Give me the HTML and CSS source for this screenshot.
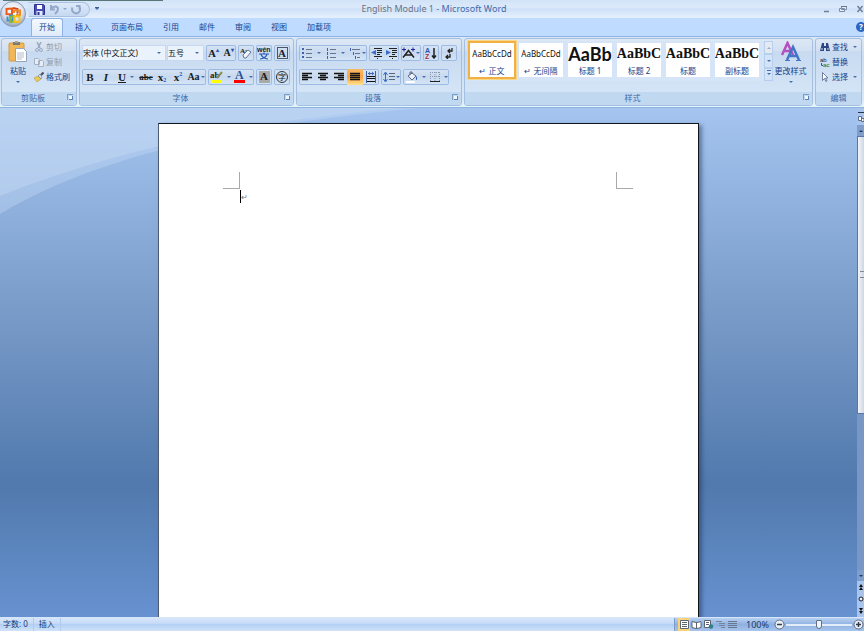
FILE: index.html
```html
<!DOCTYPE html>
<html lang="zh-CN">
<head>
    <meta charset="UTF-8">
    <title>English Module 1 - Microsoft Word</title>
    <link rel="stylesheet" href="styles.css">
</head>
<body>
    <header class="titlebar">
        <button class="office" aria-label="Office">
            <svg width="26" height="28" viewBox="0 0 26 28">
                <defs>
                    <radialGradient id="orb" cx="50%" cy="35%" r="65%">
                        <stop offset="0" stop-color="#ffffff"/>
                        <stop offset=".6" stop-color="#dce3ee"/>
                        <stop offset="1" stop-color="#8d9db8"/>
                    </radialGradient>
                </defs>
                <circle cx="13" cy="14" r="12.5" fill="url(#orb)" stroke="#8b9ab2"/>
                <g fill="none" stroke-width="2">
                    <path d="M12 8.500L6.500 9v5l5.500.500z" stroke="#ea5a1c"/>
                    <path d="M13 8l4.500 1v4.500" stroke="#d8431a"/>
                    <path d="M14 13V10.500h6V15h-4" stroke="#ef8b22"/>
                    <path d="M7.500 16.500v4h5v-5H9" stroke="#3f8fd0"/>
                    <path d="M10 17v5l4-.5V16z" stroke="#86b83a"/>
                    <path d="M14.500 16.500h5v5.500h-5z" stroke="#f3bf1e"/>
                </g>
            </svg>
        </button>
        <div class="quick">
            <button aria-label="保存"><svg width="11" height="11" viewBox="0 0 11 11"><path d="M.5.500h9l1 1v9H.500z" fill="#4a4fb8" stroke="#2c3190"/><path d="M3 1h5v4H3z" fill="#fff"/><path d="M2.500 7h6v4h-6z" fill="#e6eafa"/><path d="M3.500 8h2v3h-2z" fill="#2c3190"/></svg></button>
            <button class="with-caret" aria-label="撤消"><svg width="11" height="11" viewBox="0 0 11 11"><path d="M2 1v4.500h4M2.500 5C4 2 9 1.500 9 5c0 2-1.500 3.500-3 5" fill="none" stroke="#94a9c9" stroke-width="2"/></svg><i class="caret faded"></i></button>
            <button aria-label="重复"><svg width="11" height="11" viewBox="0 0 11 11"><path d="M6 2h3.500v3.500M9 2.500a4 4 0 1 1-6.500 1" fill="none" stroke="#94a9c9" stroke-width="2"/></svg></button>
        </div>
        <button class="customize" aria-label="自定义"><i class="caret"></i></button>
        <h1>English Module 1 <span>- Microsoft Word</span></h1>
        <div class="window-buttons">
            <button aria-label="最小化"><svg width="8" height="8" viewBox="0 0 8 8"><path d="M2 6.500h5" stroke="#6f7f98" stroke-width="1.500"/></svg></button>
            <button aria-label="还原"><svg width="8" height="8" viewBox="0 0 8 8"><path d="M2.500 1.500h5v3h-5zM.500 3.500h5v3h-5z" fill="#e4edf8" stroke="#7c8ca5"/><path d="M2 1.500h6" stroke="#66768f"/></svg></button>
            <button aria-label="关闭"><svg width="8" height="8" viewBox="0 0 8 8"><path d="M1.500 1l5 6M6.500 1l-5 6" stroke="#6f7f98" stroke-width="1.500"/></svg></button>
        </div>
    </header>

    <nav class="tabs">
        <a href="#home" class="active">开始</a>
        <a href="#insert">插入</a>
        <a href="#layout">页面布局</a>
        <a href="#references">引用</a>
        <a href="#mailings">邮件</a>
        <a href="#review">审阅</a>
        <a href="#view">视图</a>
        <a href="#addins">加载项</a>
        <button class="help" aria-label="帮助">?</button>
    </nav>

    <div class="ribbon">
        <section class="group clipboard">
            <div class="group-body">
                <button class="big">
                    <svg width="20" height="22" viewBox="0 0 20 22"><rect x="1" y="2" width="15" height="18" rx="1" fill="#efb758" stroke="#d59a45"/><path d="M5 1h7v3H5z" fill="#7d7a72"/><path d="M7 0h3v2H7z" fill="#a8a395"/><path d="M7.500 7.500h8l3 3v10h-11z" fill="#fff" stroke="#93a3bd"/><path d="M9 12h7M9 14h7M9 16h7M9 18h5" stroke="#b0bccd"/></svg>
                    <span>粘贴</span>
                    <i class="caret"></i>
                </button>
                <div class="stack">
                    <button class="small" disabled><svg width="10" height="10" viewBox="0 0 10 10"><path d="M3 0l3 6M7 0L4 6" stroke="#9aa9bf" stroke-width="1.500"/><circle cx="3" cy="8" r="1.500" fill="none" stroke="#9aa9bf"/><circle cx="7" cy="8" r="1.500" fill="none" stroke="#9aa9bf"/></svg><span>剪切</span></button>
                    <button class="small" disabled><svg width="10" height="10" viewBox="0 0 10 10"><path d="M.500 1.500h4l1 1v5h-5zM4.500 3.500h4l1 1v5h-5z" fill="#e8edf4" stroke="#a5b2c6"/></svg><span>复制</span></button>
                    <button class="small"><svg width="10" height="10" viewBox="0 0 10 10"><path d="M0 6l4-2 3 3-4 3z" fill="#eccb52" stroke="#a68a38" stroke-width=".5"/><path d="M4 4l2-2 2 3-1 2z" fill="#d5dbe8" stroke="#5b6577" stroke-width=".5"/><path d="M7 3l2.500-2.500" stroke="#4a4a58" stroke-width="2"/></svg><span>格式刷</span></button>
                </div>
            </div>
            <h2>剪贴板</h2>
            <button class="launcher" aria-label="剪贴板选项"></button>
        </section>

        <section class="group font">
            <div class="group-body rows">
                <div class="row">
                    <div class="combos">
                        <label class="combo family"><select aria-label="字体"><option>宋体 (中文正文)</option></select><i class="caret"></i></label>
                        <label class="combo size"><select aria-label="字号"><option>五号</option></select><i class="caret"></i></label>
                    </div>
                    <div class="bar">
                        <button class="narrow letter" aria-label="增大字体">A<i class="mark">▴</i></button>
                        <button class="narrow letter minor" aria-label="缩小字体">A<i class="mark">▾</i></button>
                    </div>
                    <div class="bar"><button aria-label="清除格式"><svg width="14" height="14" viewBox="0 0 14 14"><text x="1" y="7" font-size="7" font-weight="bold" font-family="Liberation Serif" fill="#222">Aa</text><path d="M4 9l5-5 3 2-5 6H5z" fill="#f3f5fa" stroke="#66779a"/></svg></button></div>
                    <div class="bar"><button aria-label="拼音指南"><svg width="14" height="14" viewBox="0 0 14 14"><text x="0" y="6" font-size="7" font-weight="bold" font-family="Liberation Sans" fill="#222">wén</text><path d="M2 8h10M7 6.500V8M4 8.500c1 2.500 3 4 7 4.500M10 8.500c-1 2.500-3 4-7 4.500" fill="none" stroke="#2a5bb8" stroke-width="1.200"/></svg></button></div>
                    <div class="bar"><button class="letter" aria-label="字符边框"><span class="boxed">A</span></button></div>
                </div>
                <div class="row">
                    <div class="bar">
                        <button class="letter">B</button>
                        <button class="letter"><em>I</em></button>
                        <button class="letter drop"><u>U</u><i class="caret"></i></button>
                        <button class="letter tiny"><s>abc</s></button>
                        <button class="letter" aria-label="下标">x<i class="mark sub">2</i></button>
                        <button class="letter" aria-label="上标">x<i class="mark">2</i></button>
                        <button class="letter drop tight">Aa<i class="caret"></i></button>
                    </div>
                    <div class="bar">
                        <button class="drop" aria-label="突出显示"><svg width="13" height="14" viewBox="0 0 13 14"><text x="0" y="8" font-size="9" font-weight="bold" font-family="Liberation Serif" fill="#222">ab</text><path d="M7 8l5-6" stroke="#8a8f58" stroke-width="2"/><path d="M1 10h11v3H1z" fill="#ff0"/></svg><i class="caret"></i></button>
                        <button class="drop snug" aria-label="字体颜色"><svg width="13" height="14" viewBox="0 0 13 14"><text x="2" y="9" font-size="12" font-weight="bold" font-family="Liberation Serif" fill="#2e4f96">A</text><path d="M1 10h11v3H1z" fill="#f00"/></svg><i class="caret"></i></button>
                    </div>
                    <div class="bar"><button class="letter"><span class="shaded">A</span></button></div>
                    <div class="bar"><button><span class="circled">字</span></button></div>
                </div>
            </div>
            <h2>字体</h2>
            <button class="launcher" aria-label="字体选项"></button>
        </section>

        <section class="group paragraph">
            <div class="group-body rows">
                <div class="row">
                    <div class="bar">
                        <button class="drop" aria-label="项目符号"><svg width="12" height="12" viewBox="0 0 12 12"><path d="M1 2h2M1 6h2M1 10h2" stroke="#3f62ad" stroke-width="2"/><path d="M5 2.500h6M5 6.500h6M5 10.500h6" stroke="#66758e"/></svg><i class="caret"></i></button>
                        <button class="drop" aria-label="编号"><svg width="12" height="12" viewBox="0 0 12 12"><path d="M2.500 1v3M2.500 5v3M2.500 9v3" stroke="#3f62ad"/><path d="M5 2.500h6M5 6.500h6M5 10.500h6" stroke="#66758e"/></svg><i class="caret"></i></button>
                        <button class="drop tight" aria-label="多级列表"><svg width="12" height="12" viewBox="0 0 12 12"><path d="M1.500 1v3M4.500 5v3M6.500 9v3" stroke="#3f62ad"/><path d="M3 2.500h8M6 6.500h5M8 10.500h3" stroke="#66758e"/></svg><i class="caret"></i></button>
                    </div>
                    <div class="bar">
                        <button class="narrow" aria-label="减少缩进量"><svg width="12" height="12" viewBox="0 0 12 12"><path d="M3 1.500h8M6 3.500h5M6 5.500h5M6 7.500h3M3 9.500h8" stroke="#222"/><path d="M6 11.500h1" stroke="#222"/><path d="M5 3v5L0 5.500z" fill="#3c6cc4"/></svg></button>
                        <button class="narrow" aria-label="增加缩进量"><svg width="12" height="12" viewBox="0 0 12 12"><path d="M3 1.500h8M6 3.500h5M6 5.500h5M6 7.500h3M3 9.500h8" stroke="#222"/><path d="M6 11.500h1" stroke="#222"/><path d="M0 3v5l5-2.500z" fill="#3c6cc4"/></svg></button>
                    </div>
                    <div class="bar"><button class="drop tight" aria-label="中文版式"><svg width="13" height="12" viewBox="0 0 13 12"><path d="M0 2.500h4M2 .500v4M9 2.500h4M11 .500v4" stroke="#23239a"/><path d="M1 10.500l5.500-7L12 10.500M3 8h7" fill="none" stroke="#222" stroke-width="1.500"/></svg><i class="caret"></i></button></div>
                    <div class="bar"><button aria-label="排序"><svg width="12" height="12" viewBox="0 0 12 12"><text x="0" y="6" font-size="7" font-weight="bold" font-family="Liberation Sans" fill="#2b55ad">A</text><text x="0" y="12" font-size="7" font-weight="bold" font-family="Liberation Sans" fill="#a8323c">Z</text><path d="M9 1v10M7 8.500l2 2.500 2-2.500" fill="none" stroke="#222" stroke-width="1.500"/></svg></button></div>
                    <div class="bar"><button aria-label="显示编辑标记"><svg width="12" height="12" viewBox="0 0 12 12"><path d="M9 1v3H5M7 2L5 4l2 2M7 7v3H3M5 8l-2 2 2 2" fill="none" stroke="#222" stroke-width="1.300"/></svg></button></div>
                </div>
                <div class="row">
                    <div class="bar">
                        <button aria-label="左对齐"><svg width="12" height="10" viewBox="0 0 12 10"><path d="M1 1.500h10M1 3.500h6M1 5.500h10M1 7.500h6" stroke="#111" stroke-width="1.300"/></svg></button>
                        <button aria-label="居中"><svg width="12" height="10" viewBox="0 0 12 10"><path d="M1 1.500h10M3 3.500h6M1 5.500h10M3 7.500h6" stroke="#111" stroke-width="1.300"/></svg></button>
                        <button aria-label="右对齐"><svg width="12" height="10" viewBox="0 0 12 10"><path d="M1 1.500h10M5 3.500h6M1 5.500h10M5 7.500h6" stroke="#111" stroke-width="1.300"/></svg></button>
                        <button class="on" aria-label="两端对齐"><svg width="12" height="10" viewBox="0 0 12 10"><path d="M1 1.500h10M1 3.500h10M1 5.500h10M1 7.500h10" stroke="#111" stroke-width="1.300"/></svg></button>
                        <button aria-label="分散对齐"><svg width="12" height="12" viewBox="0 0 12 12"><path d="M1.500 0v12M10.500 0v12M3 2.500h6" stroke="#3e5f9c"/><path d="M2 5.500h8M2 7.500h8M2 10.500h8" stroke="#111"/><path d="M3 2.500l2-2v4zM9 2.500l-2-2v4z" fill="#3c6cc4"/></svg></button>
                    </div>
                    <div class="bar"><button class="drop tight" aria-label="行距"><svg width="12" height="12" viewBox="0 0 12 12"><path d="M2.500 2v8M.500 4l2-3 2 3M.500 8l2 3 2-3" fill="none" stroke="#3c6cc4"/><path d="M6 2.500h6M6 5.500h6M6 8.500h6" stroke="#59687f"/></svg><i class="caret"></i></button></div>
                    <div class="bar">
                        <button class="drop" aria-label="底纹"><svg width="13" height="12" viewBox="0 0 13 12"><path d="M3 5l4-3 4 3-4 4z" fill="#eef2f8" stroke="#5a6a85"/><path d="M5 4V1h2v2" fill="none" stroke="#5a6a85"/><path d="M11 5c2 2 1 4 0 4z" fill="#2e5fb5"/><path d="M1 10h9v2H1z" fill="#fff"/></svg><i class="caret"></i></button>
                        <button class="drop snug" aria-label="边框"><svg width="12" height="12" viewBox="0 0 12 12"><path d="M1.500 1v9M6 1v9M10.500 1v9M1 1.500h10M1 5.500h10" stroke="#8795ad" stroke-dasharray="1 1"/><path d="M1 10.500h10" stroke="#222"/></svg><i class="caret"></i></button>
                    </div>
                </div>
            </div>
            <h2>段落</h2>
            <button class="launcher" aria-label="段落选项"></button>
        </section>

        <section class="group styles">
            <div class="group-body">
                <div class="gallery">
                    <button class="style selected"><span class="sample">AaBbCcDd</span><span>↵ 正文</span></button>
                    <button class="style"><span class="sample">AaBbCcDd</span><span>↵ 无间隔</span></button>
                    <button class="style"><span class="sample title">AaBb</span><span>标题 1</span></button>
                    <button class="style"><span class="sample heading">AaBbC</span><span>标题 2</span></button>
                    <button class="style"><span class="sample heading">AaBbC</span><span>标题</span></button>
                    <button class="style"><span class="sample heading">AaBbC</span><span>副标题</span></button>
                    <div class="gallery-scroll">
                        <button class="off" aria-label="上一行"><i class="caret up faded"></i></button>
                        <button aria-label="下一行"><i class="caret"></i></button>
                        <button aria-label="更多"><i class="caret more"></i></button>
                    </div>
                </div>
                <button class="big">
                    <svg width="20" height="22" viewBox="0 0 20 22"><g fill="none"><path d="M1 14L6.500 2 12 14M3 10h7" stroke="#b64fc0" stroke-width="2.500"/><path d="M6 19l6-13 6 13M9 15h7" stroke="#4474c4" stroke-width="2.500"/><path d="M4 19.500h5M15 19.500h5" stroke="#4474c4"/></g></svg>
                    <span>更改样式</span>
                    <i class="caret"></i>
                </button>
            </div>
            <h2>样式</h2>
            <button class="launcher" aria-label="样式选项"></button>
        </section>

        <section class="group editing">
            <div class="group-body">
                <div class="stack">
                    <button class="small"><svg width="10" height="10" viewBox="0 0 10 10"><path d="M2 1h2v3h2V1h2l2 8H6V6H4v3H0z" fill="#2c4784"/><path d="M1.500 6h1v2h-1zM7.500 6h1v2h-1z" fill="#cfe0f5"/></svg><span>查找</span><i class="caret"></i></button>
                    <button class="small"><svg width="10" height="10" viewBox="0 0 10 10"><text x="0" y="5" font-size="6" font-family="Liberation Sans" fill="#222">ab</text><text x="3" y="10" font-size="6" font-weight="bold" font-family="Liberation Sans" fill="#3f8a4e">ac</text><path d="M1.500 6v2.500H3" fill="none" stroke="#2b55ad"/></svg><span>替换</span></button>
                    <button class="small"><svg width="10" height="10" viewBox="0 0 10 10"><path d="M2.500.500v8l2-2 1.500 3 1-.5-1.500-3h2.500z" fill="#fff" stroke="#53658a" stroke-width=".8"/></svg><span>选择</span><i class="caret"></i></button>
                </div>
            </div>
            <h2>编辑</h2>
        </section>
    </div>

    <main class="workspace">
        <div class="desk">
            <svg class="swoosh" width="420" height="110" viewBox="0 0 420 110">
                <path d="M0 0h420C270 14 110 40 0 106z" fill="#c8dcf6" opacity=".35"/>
                <path d="M0 0h400C260 12 120 40 0 88z" fill="#c8dcf6" opacity=".4"/>
            </svg>
            <article class="page">
                <div class="corner left"></div>
                <div class="corner right"></div>
                <p class="text" contenteditable="true"><span class="cursor"></span><span class="mark-end">↵</span></p>
            </article>
        </div>
        <aside class="scroll">
            <button class="ruler" aria-label="标尺"><svg width="7" height="12" viewBox="0 0 7 12"><path d="M1 1.500h6" stroke="#26344e"/><path d="M1.500 5.500h3v4h-3zM4.500 7.500H7v3H4.500z" fill="#fff" stroke="#5b6d90"/></svg></button>
            <button class="arrow" aria-label="向上"><i class="caret up"></i></button>
            <div class="track"><div class="thumb"></div></div>
            <button class="arrow" aria-label="向下"><i class="caret"></i></button>
            <button class="jump" aria-label="前一页"><svg width="6" height="8" viewBox="0 0 6 8"><path d="M1 4l2-3 2 3zM1 7l2-3 2 3z" fill="#111"/></svg></button>
            <button class="jump" aria-label="选择浏览对象"><svg width="6" height="8" viewBox="0 0 6 8"><circle cx="3" cy="4" r="2" fill="#e8eefa" stroke="#222"/></svg></button>
            <button class="jump" aria-label="下一页"><svg width="6" height="8" viewBox="0 0 6 8"><path d="M1 1l2 3 2-3zM1 4l2 3 2-3z" fill="#111"/></svg></button>
        </aside>
    </main>

    <footer class="status">
        <span class="cell">字数: 0</span>
        <span class="cell">插入</span>
        <div class="view">
            <div class="view-buttons">
                <button class="on" aria-label="页面视图"><svg width="11" height="9" viewBox="0 0 11 9"><path d="M1.500.500h8v8h-8z" fill="#fff" stroke="#5c6472"/><path d="M3 2.500h5M3 4.500h5M3 6.500h5" stroke="#5c6472"/></svg></button>
                <button aria-label="阅读版式"><svg width="11" height="9" viewBox="0 0 11 9"><path d="M1 1.500l4 1 1 0 4-1v6l-4 1H5l-4-1z" fill="#fff" stroke="#5c6472"/><path d="M5.500 2v6" stroke="#5c6472"/></svg></button>
                <button aria-label="Web 版式"><svg width="11" height="9" viewBox="0 0 11 9"><path d="M1.500.500h6v7h-6z" fill="#fff" stroke="#5c6472"/><path d="M3 2.500h3M3 4.500h3" stroke="#5c6472"/><circle cx="8" cy="6.500" r="2.200" fill="#2e7f88"/></svg></button>
                <button aria-label="大纲视图"><svg width="11" height="9" viewBox="0 0 11 9"><path d="M1 1.500h6M4 3.500h6M4 5.500h6M6 7.500h4" stroke="#77859c"/></svg></button>
                <button aria-label="普通视图"><svg width="11" height="9" viewBox="0 0 11 9"><path d="M1 1.500h9M1 3.500h9M1 5.500h9M1 7.500h9" stroke="#6a7890"/></svg></button>
            </div>
            <span class="percent">100%</span>
            <button class="zoom" aria-label="缩小"><svg width="11" height="11" viewBox="0 0 11 11"><circle cx="5.500" cy="5.500" r="4.500" fill="#e9eff8" stroke="#5f6c82"/><path d="M3 5.500h5" stroke="#333d4f" stroke-width="1.500"/></svg></button>
            <input class="slider" type="range" min="0" max="100" value="50" aria-label="显示比例">
            <button class="zoom" aria-label="放大"><svg width="11" height="11" viewBox="0 0 11 11"><circle cx="5.500" cy="5.500" r="4.500" fill="#e9eff8" stroke="#5f6c82"/><path d="M3 5.500h5M5.500 3v5" stroke="#333d4f" stroke-width="1.500"/></svg></button>
        </div>
    </footer>
</body>
</html>
```
FILE: styles.css
```css
* {
    box-sizing: border-box;
}
body {
    margin: 0;
    height: 100vh;
    display: flex;
    flex-direction: column;
    overflow: hidden;
    font-family: "Noto Sans", "Noto Sans CJK SC", sans-serif;
    font-size: 8px;
    line-height: 12px;
    color: #15428b;
    background: #bfdbff;
}
button, select {
    margin: 0;
    padding: 0;
    border: 0;
    background: none;
    font: inherit;
    color: inherit;
}
button {
    display: flex;
    align-items: center;
    justify-content: center;
}
svg {
    display: block;
    flex: none;
}
.caret {
    flex: none;
    width: 0;
    height: 0;
    border: 2px solid transparent;
    border-top-color: #4a6ea9;
    border-bottom: 0;
}
.caret.up {
    border-top: 0;
    border-bottom: 2px solid #4a6ea9;
}
.caret.faded {
    opacity: 0.5;
}

/* title bar */
.titlebar {
    position: relative;
    flex: none;
    display: flex;
    align-items: center;
    height: 18px;
    padding-left: 28px;
    background: linear-gradient(#d3e3f7, #dbe9fb 40%, #cfe1f8 50%, #e6f1fe);
}
.titlebar::before {
    content: "";
    position: absolute;
    top: 0;
    left: 3px;
    width: 160px;
    height: 1px;
    background: #587878;
}
.office {
    position: absolute;
    top: 0;
    left: 0;
    z-index: 2;
}
.quick {
    display: flex;
    align-items: center;
    justify-content: space-between;
    width: 62px;
    height: 15px;
    padding: 0 8px 0 5px;
    border: 1px solid #a9c1e2;
    border-left-color: #d3e3f7;
    border-radius: 0 8px 8px 0;
    background: linear-gradient(#dce9f9, #c6d9f2);
}
.with-caret {
    gap: 3px;
}
.customize {
    width: 14px;
}
.customize .caret {
    position: relative;
}
.customize .caret::before {
    content: "";
    position: absolute;
    top: -3px;
    left: -2px;
    width: 4px;
    height: 1px;
    background: #3d5c8f;
}
.titlebar h1 {
    flex: 1;
    margin: 0;
    padding-right: 58px;
    font-size: 9px;
    font-weight: normal;
    text-align: center;
    color: #6a7382;
}
.titlebar h1 span {
    color: #3f6cac;
}
.window-buttons {
    display: flex;
    gap: 9px;
}

/* tabs */
.tabs {
    flex: none;
    display: flex;
    height: 18px;
    padding-left: 29px;
    overflow: hidden;
    background: #bfdbff;
}
.tabs a {
    padding: 0 10px;
    line-height: 18px;
    color: #15428b;
    text-decoration: none;
}
.tabs .active {
    margin: 0 2px;
    padding: 0 7px;
    border: 1px solid #8db2e3;
    border-bottom: 0;
    border-radius: 3px 3px 0 0;
    line-height: 16px;
    background: linear-gradient(#f5f9fe, #dfebf8);
}
.help {
    align-self: center;
    flex: none;
    width: 10px;
    height: 10px;
    margin-left: auto;
    margin-right: -2px;
    border-radius: 50%;
    background: #2a65c4;
    color: #fff;
    font-weight: bold;
}

/* ribbon */
.ribbon {
    flex: none;
    display: flex;
    gap: 2px;
    padding: 1px 2px 1px 1px;
    border-top: 1px solid #8db2e3;
    border-bottom: 1px solid #8fb2dc;
    background: linear-gradient(#dbe7f5, #c9dcf1 30%, #d9e9fa 90%, #e5f6fd);
}
.group {
    position: relative;
    flex: none;
    display: flex;
    flex-direction: column;
    height: 68px;
    border: 1px solid #a3c0e2;
    border-radius: 3px;
    overflow: hidden;
    background: linear-gradient(#dee8f5, #d2e0f2 18%, #c8daf0 19%, #d8e8f9);
}
.group h2 {
    flex: none;
    height: 13px;
    margin: 0;
    background: #c1d8f1;
    font-size: 8px;
    font-weight: normal;
    text-align: center;
    color: #3e6aaa;
}
.group-body {
    flex: 1;
    display: flex;
}
.clipboard h2, .font h2, .paragraph h2, .styles h2 {
    padding-right: 12px;
}
.clipboard {
    width: 76px;
}
.font {
    width: 215px;
}
.paragraph {
    width: 166px;
}
.styles {
    flex: 1;
}
.editing {
    width: 47px;
}
.launcher {
    position: absolute;
    right: 3px;
    bottom: 5px;
    width: 6px;
    height: 6px;
    border-top: 1px solid #7d9cc6;
    border-left: 1px solid #7d9cc6;
    align-items: flex-end;
    justify-content: flex-end;
}
.launcher::after {
    content: "";
    width: 3px;
    height: 3px;
    border-right: 1px solid #5d80b3;
    border-bottom: 1px solid #5d80b3;
    background: #f2f7fd;
}
.big {
    flex-direction: column;
    justify-content: flex-start;
    width: 32px;
    padding-top: 2px;
}
.big span {
    margin: 2px 0 4px;
    white-space: nowrap;
}
.stack {
    display: flex;
    flex-direction: column;
}
.small {
    justify-content: flex-start;
    gap: 2px;
    height: 15px;
    white-space: nowrap;
}
.small .caret {
    margin-left: 3px;
}
.small:disabled {
    color: #8f9bab;
}
.editing .stack {
    padding-left: 4px;
}
.rows {
    flex-direction: column;
    gap: 8px;
    padding: 6px 2px 0;
}
.row {
    display: flex;
    gap: 2px;
}
.bar {
    display: flex;
    height: 16px;
    border-radius: 2px;
    box-shadow: inset 0 0 0 1px #9dbbe2;
    background: linear-gradient(#d7e4f4, #c7d9ef 50%, #d5e5f7);
}
.bar button {
    width: 16px;
}
.bar .narrow {
    width: 15px;
}
.bar .drop {
    width: 24px;
    gap: 4px;
}
.bar .snug {
    width: 22px;
    gap: 3px;
}
.bar .tight {
    width: 20px;
    gap: 1px;
}
.bar .on {
    background: linear-gradient(#f9b968, #fda243 50%, #fee28c);
}
.letter {
    font-family: "Liberation Serif", serif;
    font-size: 11px;
    font-weight: bold;
    color: #1a1a1a;
}
.bar .letter.minor, .bar .letter.tight {
    font-size: 10px;
}
.bar .tiny {
    font-size: 9px;
}
.mark {
    align-self: flex-start;
    font-size: 6px;
    font-style: normal;
    line-height: 10px;
    color: #2b55ad;
}
.mark.sub {
    align-self: flex-end;
}
.boxed, .shaded {
    width: 11px;
    height: 12px;
    line-height: 11px;
    text-align: center;
}
.boxed {
    border: 1px solid #4b5566;
}
.shaded {
    background: #a9a9a9;
}
.circled {
    width: 12px;
    height: 12px;
    border: 1px solid #333;
    border-radius: 50%;
    line-height: 10px;
    color: #111;
}
.combos {
    display: flex;
    gap: 1px;
    width: 122px;
}
.combo {
    display: flex;
    align-items: center;
    height: 16px;
    padding: 0 4px 0 0;
    border: 1px solid #c6d9f0;
    background: #eaf2fb;
}
.combo select {
    flex: 1;
    min-width: 0;
    appearance: none;
    color: #111;
}
.family {
    flex: 1;
}
.size {
    width: 37px;
}

/* style gallery */
.styles .group-body {
    justify-content: space-between;
    padding: 2px 4px 0 2px;
}
.styles .big {
    padding-top: 0;
    width: 36px;
}
.gallery {
    display: flex;
    gap: 5px;
    height: 40px;
    padding-left: 3px;
    background: #d5e5f7;
}
.style {
    flex-direction: column;
    justify-content: flex-start;
    width: 44px;
    height: 34px;
    margin-top: 2px;
    background: #fff;
    overflow: hidden;
    white-space: nowrap;
}
.style.selected {
    box-shadow: 0 0 0 2px #f0b045, 0 0 0 3px #f6d888;
    overflow: visible;
}
.sample {
    height: 22px;
    line-height: 22px;
    color: #111;
}
.sample.title {
    font-family: Lato, sans-serif;
    font-size: 18px;
    font-weight: bold;
}
.sample.heading {
    font-family: "Liberation Serif", serif;
    font-size: 14px;
    font-weight: bold;
}
.gallery-scroll {
    display: flex;
    flex-direction: column;
    width: 9px;
}
.gallery-scroll button {
    flex: 1;
    border: 1px solid #b7cfee;
    background: #d3e4f8;
}
.gallery-scroll .off {
    background: #e6e9ee;
}
.more {
    position: relative;
}
.more::before {
    content: "";
    position: absolute;
    top: -5px;
    left: -2px;
    width: 4px;
    height: 1px;
    background: #4a6ea9;
}

/* document area */
.workspace {
    flex: 1;
    display: flex;
    min-height: 0;
    background: linear-gradient(#a5c5f0, #7b9dca 38%, #5179ad 74%, #6792d0);
}
.desk {
    position: relative;
    flex: 1;
    display: flex;
    justify-content: center;
    overflow: hidden;
    padding-top: 15px;
}
.swoosh {
    position: absolute;
    top: 0;
    left: 0;
}
.page {
    position: relative;
    width: 541px;
    padding: 66px 81px;
    border: 1px solid #10141c;
    border-left-color: #4d5a70;
    border-bottom: 0;
    background: #fff;
    box-shadow: 3px 2px 4px rgba(30, 50, 90, 0.5);
}
.corner {
    position: absolute;
    top: 48px;
    width: 17px;
    height: 17px;
    border-bottom: 1px solid #aaa;
}
.corner.left {
    left: 64px;
    border-right: 1px solid #aaa;
}
.corner.right {
    right: 65px;
    border-left: 1px solid #aaa;
}
.text {
    display: flex;
    align-items: center;
    margin: 0;
    color: #777;
}
.cursor {
    width: 1px;
    height: 13px;
    background: #000;
}

/* scroll bar */
.scroll {
    display: flex;
    flex-direction: column;
    width: 7px;
    background: #a9c5ee;
}
.ruler {
    height: 17px;
}
.arrow {
    height: 11px;
    background: #7f9ecb;
}
.arrow .caret {
    border-top-color: #26395c;
    border-bottom-color: #26395c;
}
.track {
    flex: 1;
    background: #7897c5;
}
.thumb {
    height: 64%;
    border: 1px solid #5577ab;
    border-right: 0;
    background: linear-gradient(90deg, #f2f5fa, #cfd7e2);
    display: flex;
    align-items: center;
}
.thumb::after {
    content: "";
    width: 100%;
    height: 5px;
    margin-left: 2px;
    border-top: 1px solid #7f8a99;
    border-bottom: 1px solid #7f8a99;
}
.jump {
    height: 12px;
}

/* status bar */
.status {
    flex: none;
    display: flex;
    height: 14px;
    border-top: 1px solid #d6e5f8;
    background: linear-gradient(#d7e6f9, #c7dcf8 40%, #b3d0f5 50%, #d0e2f8);
}
.cell {
    padding: 0 5px;
    border-right: 1px solid #b0cbee;
    color: #1c3a6e;
}
.cell:first-child {
    padding-left: 3px;
}
.view {
    display: flex;
    align-items: center;
    gap: 5px;
    width: 190px;
    margin-left: auto;
    padding-left: 3px;
    border-left: 1px solid #7c9cc8;
    background: linear-gradient(#b8d1f3, #8fb1e0 50%, #a6c4ec);
}
.view-buttons {
    display: flex;
    margin-right: 3px;
}
.view-buttons button {
    width: 12px;
    height: 13px;
}
.view-buttons .on {
    background: #fbd27c;
}
.percent {
    color: #1c3a6e;
    font-size: 9px;
}
.slider {
    flex: 1;
    min-width: 0;
    height: 11px;
    margin: 0 -4px;
    appearance: none;
    background: linear-gradient(#e3edfa, #e3edfa) center / 100% 2px no-repeat;
}
.slider::-webkit-slider-thumb {
    appearance: none;
    width: 6px;
    height: 9px;
    border: 1px solid #5f6c82;
    border-radius: 1px 1px 3px 3px;
    background: #eef3fa;
}
```
